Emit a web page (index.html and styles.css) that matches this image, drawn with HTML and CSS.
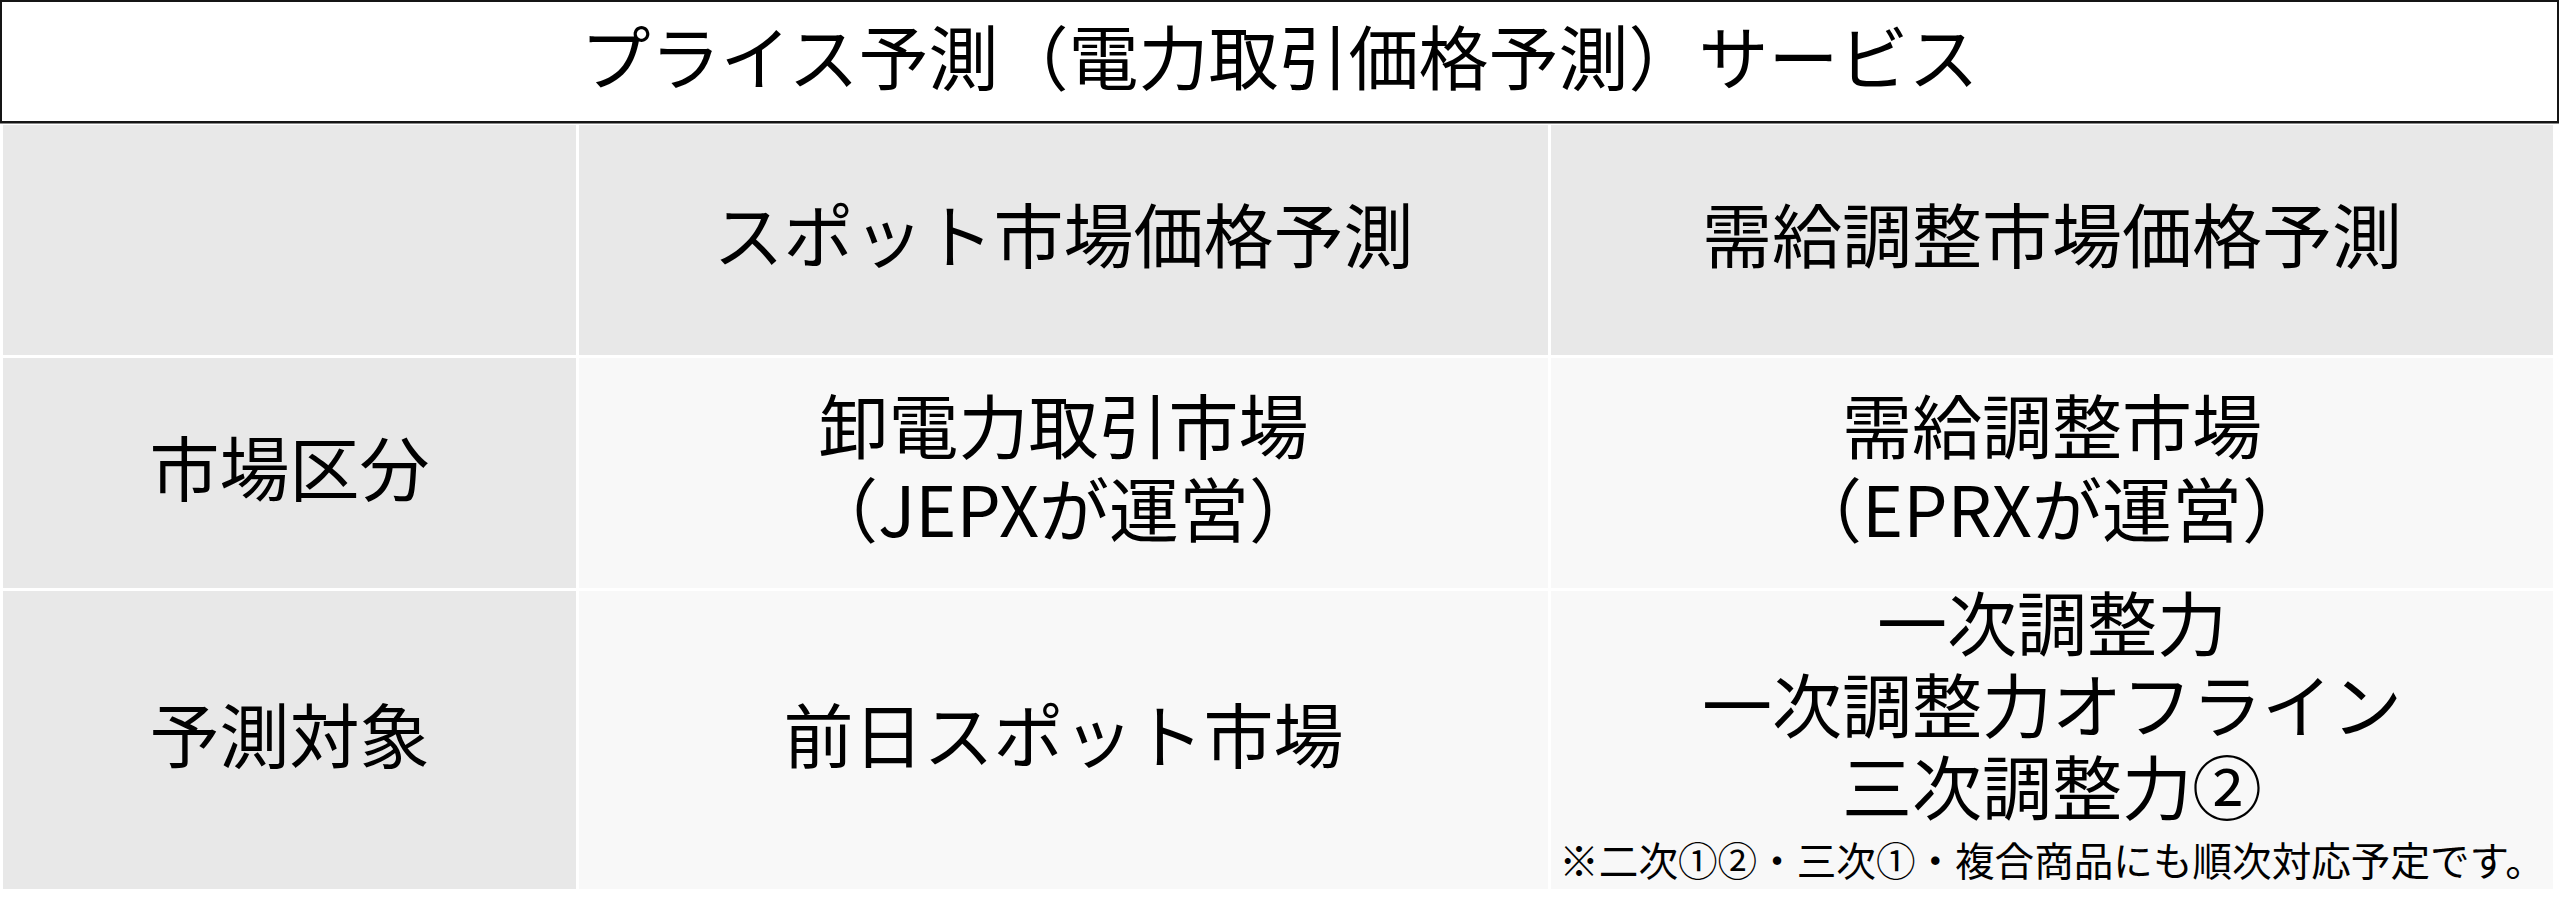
FILE: index.html
```html
<!DOCTYPE html>
<html lang="ja">
<head>
<meta charset="utf-8">
<title>プライス予測</title>
<link rel="stylesheet" href="styles.css">
</head>
<body>
<div class="page">
  <div class="title">プライス予測（電力取引価格予測）サービス</div>
  <div class="table">
    <div class="cell head"></div>
    <div class="cell head">スポット市場価格予測</div>
    <div class="cell head">需給調整市場価格予測</div>

    <div class="cell head">市場区分</div>
    <div class="cell data">卸電力取引市場<br>（JEPXが運営）</div>
    <div class="cell data">需給調整市場<br>（EPRXが運営）</div>

    <div class="cell head">予測対象</div>
    <div class="cell data">前日スポット市場</div>
    <div class="cell data stack">
      <div class="lines">一次調整力<br>一次調整力オフライン<br>三次調整力②</div>
      <div class="note">※二次①②・三次①・複合商品にも順次対応予定です。</div>
    </div>
  </div>
</div>
</body>
</html>
```

FILE: styles.css
```css
html, body {
  margin: 0;
  padding: 0;
  background: #ffffff;
}
body {
  font-family: "Noto Sans CJK JP", "Noto Sans", "DejaVu Sans", sans-serif;
  color: #000;
  width: 2560px;
  height: 915px;
  overflow: hidden;
}
.page {
  display: flex;
  flex-direction: column;
  gap: 2px;
}
.title {
  box-sizing: border-box;
  width: 2559px;
  height: 123px;
  border: 2px solid #151515;
  box-shadow: 0 1px 0 #888;
  display: flex;
  align-items: center;
  justify-content: center;
  font-size: 70px;
  line-height: 1;
  padding-bottom: 14px;
}
.table {
  margin-left: 3px;
  width: 2550px;
  display: grid;
  grid-template-columns: 573px 969px 1002px;
  grid-template-rows: 230px 230px 298px;
  gap: 3px;
}
.cell {
  box-sizing: border-box;
  display: flex;
  align-items: center;
  justify-content: center;
  text-align: center;
  font-size: 70px;
  line-height: 83px;
  padding-bottom: 16px;
}
.head {
  background: #e8e8e8;
}
.data {
  background: #f8f8f8;
}
.stack {
  flex-direction: column;
  justify-content: flex-start;
  padding-bottom: 0;
}
.lines {
  line-height: 82px;
  margin-top: -11px;
}
.note {
  font-size: 39.6px;
  line-height: 50px;
  margin-top: 8px;
  white-space: nowrap;
}
```
